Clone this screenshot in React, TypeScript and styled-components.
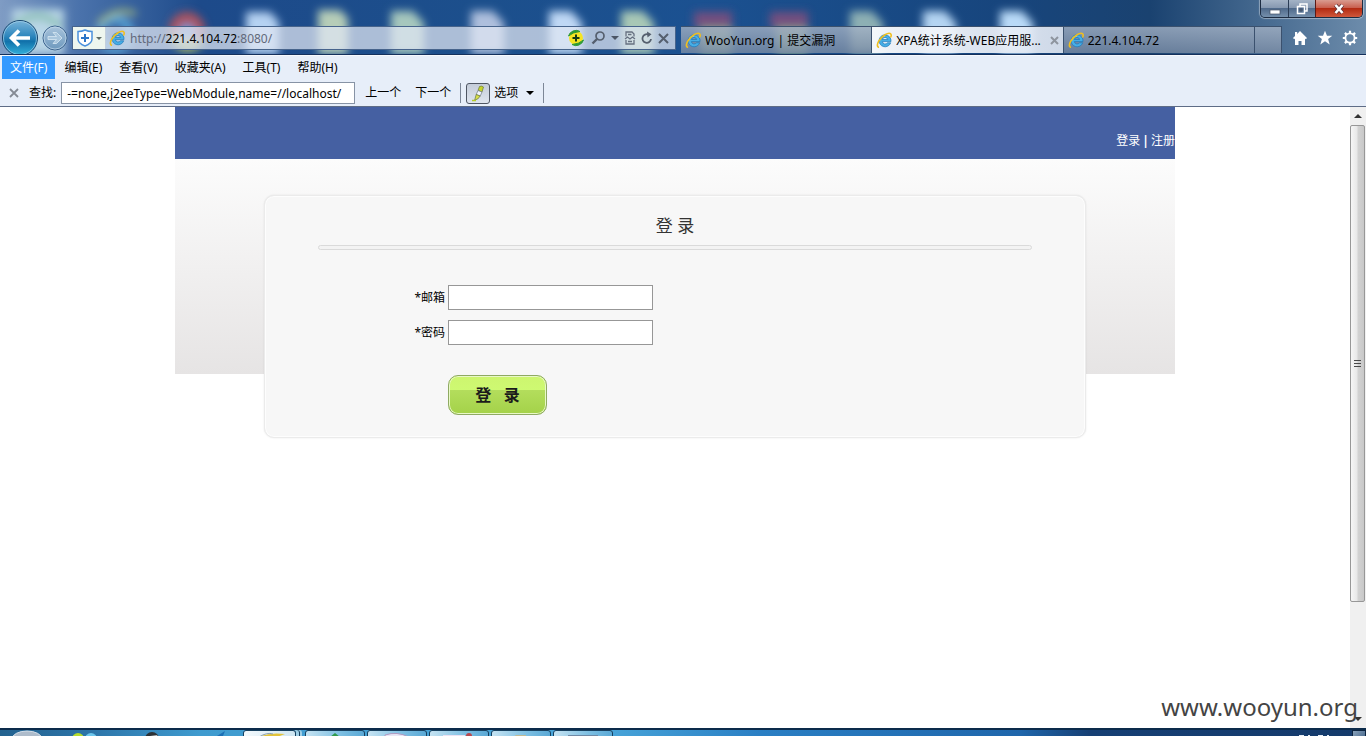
import React from "react";
import styled, { createGlobalStyle, css } from "styled-components";

const Global = createGlobalStyle`
  *, *::before, *::after { box-sizing: border-box; }
  body { margin: 0; background: #fff; overflow: hidden; }
  button, input { font: inherit; }
`;

const Desktop = styled.div`
  position: relative;
  display: flex;
  flex-direction: column;
  height: 100vh;
  font-family: "Noto Sans", "Noto Sans CJK SC", sans-serif;
  font-size: 12px;
  line-height: 16px;
  color: #000;
`;

const PlainButton = styled.button`
  display: flex;
  align-items: center;
  justify-content: center;
  padding: 0;
  border: 0;
  background: none;
  color: inherit;
  flex: none;
`;

/* ---------- window frame ---------- */

const Frame = styled.header`
  position: relative;
  flex: none;
  overflow: hidden;
  background: linear-gradient(90deg, #7f9cc4 0, #4a72ab 80px, #1d4a8a 200px, #1c4f8c 480px, #1b5191 700px, #17457d 1000px, #1a4270 1150px, #45698f 1260px, #6d8cab 100%);
  border-bottom: 1px solid #14305c;
`;

const Glass = styled.svg`
  position: absolute;
  left: 0;
  top: 0;
  width: 100%;
  height: 54px;
`;

const CaptionRow = styled.div`
  position: relative;
  display: flex;
  justify-content: flex-end;
  height: 20px;
  padding-right: 3px;
`;

const CaptionGroup = styled.div`
  display: flex;
  height: 18px;
  border: 1px solid #1d2c42;
  border-top: 0;
  border-radius: 0 0 5px 5px;
  overflow: hidden;
  box-shadow: 0 0 1px 1px rgba(255, 255, 255, 0.4);
`;

const CaptionButton = styled(PlainButton)<{ $close?: boolean }>`
  width: ${(p) => (p.$close ? 47 : 27)}px;
  border-left: 1px solid ${(p) => (p.$close ? "#5b1a16" : "#2a3c55")};
  background: ${(p) =>
    p.$close
      ? "linear-gradient(#d99c90 0, #c9604f 45%, #b32b12 50%, #d0583c 100%)"
      : "linear-gradient(#a4b3c6 0, #8799b1 45%, #506a8b 50%, #7590ac 100%)"};
  &:first-child { border-left: 0; }
`;

const NavRow = styled.div`
  position: relative;
  display: flex;
  align-items: flex-start;
  height: 34px;
`;

const RoundNav = styled.div`
  display: flex;
  align-items: center;
  width: 72px;
  height: 34px;
  flex: none;
`;

const AddressBar = styled.div`
  display: flex;
  align-items: center;
  flex: 603 1 0;
  min-width: 0;
  height: 24px;
  margin-top: 6px;
  border: 1px solid #47648c;
  background: rgba(222, 230, 241, 0.74);
`;

const Shield = styled(PlainButton)`
  width: 33px;
  height: 22px;
  background: #eef6ef;
  border-right: 1px solid #c3cfdc;
  gap: 3px;
`;

const AddressField = styled.div`
  display: flex;
  align-items: center;
  flex: 1;
  min-width: 0;
  gap: 4px;
  padding-left: 3px;
`;

const Url = styled.div`
  padding-top: 1px;
  color: #62697a;
  white-space: nowrap;
  b { font-weight: 400; color: #000; }
`;

const AddressTools = styled.div`
  display: flex;
  align-items: center;
  gap: 5px;
  padding-right: 6px;
`;

const Tabs = styled.div`
  display: flex;
  flex: 602 1 0;
  min-width: 0;
  height: 27px;
  margin: 6px 0 0 5px;
`;

const Tab = styled.button<{ $active?: boolean; $stub?: boolean }>`
  display: flex;
  align-items: center;
  gap: 3px;
  flex: ${(p) => (p.$stub ? "0 0 27px" : "1 1 0")};
  min-width: 0;
  padding: 1px 4px 0;
  border: 1px solid #3b516e;
  border-width: 1px 1px 0 0;
  color: #000;
  white-space: nowrap;
  text-align: left;
  background: ${(p) =>
    p.$active
      ? "linear-gradient(90deg, rgba(248,250,253,.96), rgba(226,233,244,.9))"
      : "linear-gradient(rgba(164,178,197,.8), rgba(122,140,165,.8))"};
`;

const TabTitle = styled.span`
  flex: 1;
  min-width: 0;
  overflow: hidden;
`;

const FrameTools = styled.div`
  display: flex;
  align-items: center;
  justify-content: flex-end;
  gap: 9px;
  width: 84px;
  height: 34px;
  padding: 2px 8px 0 0;
  flex: none;
`;

/* ---------- menu and find bars ---------- */

const Bars = styled.div`
  flex: none;
  background: #e7eef9;
  border-top: 1px solid #f6f9fd;
  border-bottom: 1px solid #5e6c86;
`;

const MenuBar = styled.nav`
  display: flex;
  gap: 1px;
  height: 24px;
  padding-left: 2px;
`;

const MenuItem = styled(PlainButton)<{ $active?: boolean }>`
  height: 23px;
  padding: 0 8px;
  ${(p) => p.$active && css`background: #3399ff; color: #fff;`}
`;

const FindBar = styled.div`
  display: flex;
  align-items: center;
  height: 26px;
  padding-left: 8px;
`;

const FindLabel = styled.label`
  margin: 0 5px 0 9px;
`;

const FindInput = styled.input`
  width: 294px;
  height: 22px;
  padding: 0 0 0 5px;
  border: 1px solid #8793a5;
  background: #fff;
  color: #000;
`;

const FindLinks = styled.div`
  display: flex;
  gap: 14px;
  margin-left: 10px;
`;

const Separator = styled.span`
  width: 1px;
  height: 20px;
  margin-left: 9px;
  background: #7d8797;
`;

const Highlight = styled(PlainButton)`
  width: 24px;
  height: 21px;
  margin: 0 4px 0 5px;
  border: 1px solid #4f5663;
  border-radius: 3px;
  background: linear-gradient(#c4ccd9, #dfe5ef);
`;

const Options = styled(PlainButton)`
  gap: 8px;
`;

/* ---------- page ---------- */

const Viewport = styled.div`
  display: flex;
  flex: 1;
  min-height: 0;
  background: #fff;
`;

const PageArea = styled.div`
  flex: 1;
  min-width: 0;
`;

const Site = styled.div`
  max-width: 1000px;
  margin: 0 auto;
`;

const SiteHeader = styled.div`
  display: flex;
  align-items: flex-end;
  justify-content: flex-end;
  gap: 2px;
  height: 52px;
  padding-bottom: 10px;
  background: #4560a2;
  color: #fff;
  a { color: #fff; text-decoration: none; }
`;

const Band = styled.main`
  padding: 36px 89px 0;
  background: linear-gradient(#fcfcfc, #e6e4e4) no-repeat 0 0 / 100% 215px;
`;

const Panel = styled.section`
  min-height: 243px;
  border: 1px solid #ebebeb;
  border-radius: 10px;
  background: #f7f7f7;
  box-shadow: inset 0 0 0 1px #fdfdfd, 0 0 2px rgba(0, 0, 0, 0.1);
  padding: 18px 53px 0;
`;

const Heading = styled.h1`
  margin: 0;
  font-size: 17px;
  line-height: 24px;
  font-weight: 400;
  text-align: center;
  color: #333;
`;

const Rule = styled.div`
  height: 5px;
  margin: 7px 0 35px;
  border: 1px solid #dadada;
  border-radius: 3px;
  background: #f3f3f3;
`;

const Form = styled.form`
  display: grid;
  grid-template-columns: 127px 205px;
  column-gap: 3px;
  row-gap: 10px;
  align-items: center;
`;

const FieldLabel = styled.label`
  text-align: right;
`;

const Field = styled.input`
  width: 205px;
  height: 25px;
  padding: 0 4px;
  border: 1px solid #979797;
  background: #fff;
`;

const Submit = styled.button`
  grid-column: 2;
  justify-self: start;
  width: 99px;
  height: 40px;
  margin-top: 20px;
  padding: 0;
  border: 1px solid #8faa62;
  border-radius: 10px;
  background: linear-gradient(#cdf56f 0, #cef972 37%, #b3dd5c 38%, #a4d249 100%);
  box-shadow: inset 0 0 0 1px #e9f8c8;
  font-size: 16px;
  font-weight: 700;
  color: #1b1b1b;
  white-space: pre;
`;

/* ---------- scroll bar ---------- */

const ScrollBar = styled.div`
  display: flex;
  flex-direction: column;
  flex: none;
  width: 16px;
  background: #f0f0f0;
`;

const ScrollArrow = styled(PlainButton)`
  height: 18px;
`;

const Thumb = styled.div`
  display: flex;
  align-items: center;
  justify-content: center;
  flex: 477 1 0;
  margin-right: 1px;
  border: 1px solid #979797;
  border-radius: 2px;
  background: linear-gradient(90deg, #f6f6f6 0, #e8e8e8 45%, #d2d2d2 55%, #c8c8c8 100%);
`;

const Track = styled.div`
  flex: 109 1 0;
`;

const Watermark = styled.div`
  position: absolute;
  right: 8px;
  bottom: 12px;
  font-size: 24px;
  line-height: 34px;
  color: #444;
`;

/* ---------- task bar ---------- */

const TaskBar = styled.footer`
  display: flex;
  flex: none;
  height: 8px;
  overflow: hidden;
  border-top: 2px solid #0c2b4b;
  background: linear-gradient(90deg, #23628f 0, #2c74a8 90px, #3f9bcf 200px, #49a6da 600px, #2a7fc4 760px, #1f66ab 1020px, #163f74 1090px, #143a6b 100%);
`;

const Launchers = styled.svg`
  flex: none;
  width: 243px;
  height: 6px;
`;

const Task = styled(PlainButton)<{ $active?: boolean }>`
  width: ${(p) => (p.$active ? 53 : 60)}px;
  height: 12px;
  margin-right: ${(p) => (p.$active ? 9 : 2)}px;
  align-items: flex-start;
  border: 1px solid #17405f;
  border-radius: 3px;
  box-shadow: ${(p) => (p.$active ? "3px 0 0 #9fcfe6, 4px 0 0 #17405f, 6px 0 0 #9fcfe6" : "none")};
  background: ${(p) =>
    p.$active
      ? "linear-gradient(90deg, #f3f9fc, #cfe6f2)"
      : "linear-gradient(90deg, #c5e3f2, #7dbfe2 60%, #5aa9d6)"};
`;

const Tray = styled.div`
  display: flex;
  margin-left: auto;
  gap: 20px;
`;

const ShowDesktop = styled(PlainButton)`
  width: 14px;
  height: 12px;
  border: 1px solid #0c2440;
  background: linear-gradient(135deg, #8aa2ba, #3d5f86);
`;

/* ---------- drawings ---------- */

const IeIcon = () => (
  <svg width="17" height="17" viewBox="0 0 17 17" style={{ flex: "none" }} aria-hidden="true">
    <path fillRule="evenodd" d="M9 2.800a6 6 0 0 1 6 6.800H6.300a2.900 2.900 0 0 0 5.200 1.200h3.200A6 6 0 1 1 9 2.800zM6.300 7.500h5.400a2.800 2.800 0 0 0-5.400 0z" fill="#46aee6" stroke="#1c78ba" strokeWidth=".7" />
    <path d="M4.200 8.200A5 5 0 0 1 9 3.900" fill="none" stroke="#a5dcf7" />
    <path d="M2.300 15.200C-.4 13 3.600 6 9 2.800c3.200-2 5.800-2 6.200 0 .1 1-.1 1.600-.4 2.200" fill="none" stroke="#f0bf1e" strokeWidth="1.600" strokeLinecap="round" />
  </svg>
);

const Caret = ({ color = "#4c5666" }: { color?: string }) => (
  <svg width="8" height="4" viewBox="0 0 8 4" aria-hidden="true"><path d="M0 0h8L4 4z" fill={color} /></svg>
);

const deskFiles = [
  { x: 388, c: "#a6c7bd" }, { x: 468, c: "#aebfdd" }, { x: 546, c: "#bfd8f5" },
  { x: 618, c: "#a8c8b6" }, { x: 847, c: "#8db0b4" }, { x: 920, c: "#b4d4f2" }, { x: 997, c: "#b9daf8" },
];

const GlassDrawing = () => (
  <Glass aria-hidden="true">
    <defs>
      <filter id="soft" x="-10%" y="-30%" width="120%" height="160%"><feGaussianBlur stdDeviation="4" /></filter>
    </defs>
    <g filter="url(#soft)">
      <rect x="12" y="9" width="52" height="45" fill="#b9d6e6" />
      <path d="M14 26Q38 6 60 26" stroke="#74b7a0" strokeWidth="5" fill="none" />
      <circle cx="115" cy="34" r="15" fill="none" stroke="#58a4d6" strokeWidth="8" />
      <path d="M98 24Q116 6 136 14" stroke="#9eb57f" strokeWidth="5" fill="none" />
      <circle cx="187" cy="30" r="18" fill="#a9525f" />
      <path d="M170 34a18 18 0 0 0 34 8z" fill="#a9b765" />
      <circle cx="187" cy="32" r="8" fill="#6d9ad8" />
      <path d="M246 12h24l9 10v32h-33z" fill="#b5d2f2" />
      <path d="M318 10h22l8 8v36h-30z" fill="#b6cdb8" />
      {deskFiles.map((f) => (
        <path key={f.x} d={`M${f.x + 3} 11h22l11 12v31h-33z`} fill={f.c} />
      ))}
      <path d="M694 12h38v16h-38zM770 12h38v16h-38z" fill="#74507f" />
      <path d="M700 28h32v26h-32zM776 28h32v26h-32z" fill="#8fae93" />
    </g>
  </Glass>
);

const BackForward = () => (
  <svg width="72" height="34" viewBox="0 20 72 34" role="img" aria-label="后退 前进">
    <defs>
      <linearGradient id="back" x1="0" y1="0" x2="0" y2="1">
        <stop offset="0" stopColor="#78b4da" /><stop offset=".45" stopColor="#2d86bd" />
        <stop offset=".6" stopColor="#1272ab" /><stop offset="1" stopColor="#35b4dd" />
      </linearGradient>
      <linearGradient id="fwd" x1="0" y1="0" x2="0" y2="1">
        <stop offset="0" stopColor="#a9c4dc" /><stop offset="1" stopColor="#6d98bd" />
      </linearGradient>
    </defs>
    <circle cx="20" cy="38" r="17.500" fill="url(#back)" stroke="#17466f" />
    <circle cx="20" cy="38" r="16.500" fill="none" stroke="#a5d2ea" strokeOpacity=".7" />
    <path d="M30 38H12M19 30.500L11.500 38l7.500 7.500" fill="none" stroke="#fff" strokeWidth="3.600" />
    <circle cx="55" cy="38" r="12" fill="url(#fwd)" stroke="#3c638d" />
    <circle cx="55" cy="38" r="11" fill="none" stroke="#c6dcec" strokeOpacity=".7" />
    <path d="M48 36.500h8.500l-3.500-4h3.500l5.500 5.500-5.500 5.500H53l3.500-4H48z" fill="#a9c6dd" stroke="#d8e8f4" strokeWidth=".8" />
  </svg>
);

const ToolIcons = () => (
  <AddressTools>
    <svg width="18" height="18" viewBox="0 0 18 18" aria-hidden="true">
      <circle cx="9" cy="9" r="7" fill="#f5e523" />
      <path d="M1.500 7A7.800 7.800 0 0 1 13 2.500Q6 3 1.500 7zM16.500 11A7.800 7.800 0 0 1 5 15.500Q12 15 16.500 11z" fill="#2e9a35" stroke="#2e9a35" />
      <path d="M9 5.500v7M5.500 9h7" stroke="#163c16" strokeWidth="2" />
    </svg>
    <svg width="16" height="16" viewBox="0 0 16 16" fill="none" stroke="#555f6e" aria-hidden="true">
      <circle cx="10" cy="6" r="4" strokeWidth="1.700" /><path d="M7 9L2.500 13.500" strokeWidth="2.400" />
    </svg>
    <Caret />
    <svg width="12" height="14" viewBox="0 0 12 14" fill="none" stroke="#667080" strokeWidth="1.300" aria-hidden="true">
      <path d="M2 5.500V1h6l2 2v2.500M2 9v4h8V9M1 8l2.500-2 2.500 2 2.500-2L11 8M4 3.500h3.500M4 10.500h4" />
    </svg>
    <svg width="12" height="14" viewBox="0 0 12 14" fill="none" stroke="#555f6e" strokeWidth="1.800" aria-hidden="true">
      <path d="M10 8A4.300 4.300 0 1 1 7.500 3.600" /><path d="M6 .5l4.500 2.800L6.500 6.500z" fill="#555f6e" stroke="none" />
    </svg>
    <svg width="11" height="11" viewBox="0 0 11 11" stroke="#555f6e" strokeWidth="2" aria-hidden="true"><path d="M1 1l9 9M10 1l-9 9" /></svg>
  </AddressTools>
);

const menus = ["文件(F)", "编辑(E)", "查看(V)", "收藏夹(A)", "工具(T)", "帮助(H)"];

export default function App() {
  return (
    <Desktop>
      <Global />
      <Frame>
        <GlassDrawing />
        <CaptionRow>
          <CaptionGroup>
            <CaptionButton aria-label="最小化">
              <svg width="12" height="14"><rect x="1" y="8" width="10" height="4" fill="#fff" stroke="#445267" strokeWidth=".7" /></svg>
            </CaptionButton>
            <CaptionButton aria-label="还原">
              <svg width="12" height="14" viewBox="0 0 12 14" fill="none" stroke="#fff" strokeWidth="1.500">
                <path d="M4 4V2h7v7H9" /><rect x="1.500" y="4.500" width="7" height="7" /><path d="M4 7h2v2H4z" strokeWidth="1" stroke="#45546b" />
              </svg>
            </CaptionButton>
            <CaptionButton $close aria-label="关闭">
              <svg width="12" height="12" viewBox="0 0 12 12"><path d="M2.500 2l7 8M9.500 2l-7 8" stroke="#5a3038" strokeWidth="4" /><path d="M2.500 2l7 8M9.500 2l-7 8" stroke="#fff" strokeWidth="2.600" /></svg>
            </CaptionButton>
          </CaptionGroup>
        </CaptionRow>
        <NavRow>
          <RoundNav><BackForward /></RoundNav>
          <AddressBar>
            <Shield aria-label="安全">
              <svg width="16" height="18" viewBox="0 0 16 18"><path d="M1 2.500q4 0 7-1.500 3 1.500 7 1.500V10q0 4.500-7 7-7-2.500-7-7z" fill="#fff" stroke="#4a90dc" strokeWidth="1.500" /><path d="M8 5v8M4 9h8" stroke="#2b74c8" strokeWidth="2" /></svg>
              <svg width="6" height="3"><path d="M0 0h6L3 3z" fill="#5c6b66" /></svg>
            </Shield>
            <AddressField>
              <IeIcon />
              <Url>http://<b>221.4.104.72</b>:8080/</Url>
            </AddressField>
            <ToolIcons />
          </AddressBar>
          <Tabs>
            <Tab><IeIcon /><TabTitle>WooYun.org | 提交漏洞</TabTitle></Tab>
            <Tab $active>
              <IeIcon /><TabTitle>XPA统计系统-WEB应用服...</TabTitle>
              <svg width="9" height="9" viewBox="0 0 9 9" stroke="#8e959f" strokeWidth="2"><path d="M1 1l7 7M8 1L1 8" /></svg>
            </Tab>
            <Tab><IeIcon /><TabTitle>221.4.104.72</TabTitle></Tab>
            <Tab $stub aria-label="新建标签页" />
          </Tabs>
          <FrameTools>
            <PlainButton aria-label="主页">
              <svg width="16" height="16" viewBox="0 0 16 16" fill="#fff"><path d="M8 1l7 7-1.200 1.200L13 8.500V15H9.500v-4h-3v4H3V8.500l-.8.7L1 8l2-2V2h2.200v2z" /></svg>
            </PlainButton>
            <PlainButton aria-label="收藏">
              <svg width="16" height="16" viewBox="0 0 16 16" fill="#fff"><path d="M8 .8l2 5h5.300l-4.200 3.300 1.600 5.400L8 11.300l-4.700 3.200 1.600-5.400L.7 5.800H6z" /></svg>
            </PlainButton>
            <PlainButton aria-label="工具">
              <svg width="16" height="16" viewBox="0 0 16 16" fill="none" stroke="#fff"><circle cx="8" cy="8" r="4.600" strokeWidth="1.800" /><path d="M8 .8v3M8 12.200v3M.8 8h3M12.200 8h3M2.900 2.900l2 2M11.100 11.100l2 2M2.900 13.100l2-2M11.100 4.900l2-2" strokeWidth="2.200" /></svg>
            </PlainButton>
          </FrameTools>
        </NavRow>
      </Frame>

      <Bars>
        <MenuBar>
          {menus.map((m, i) => <MenuItem key={m} $active={i === 0}>{m}</MenuItem>)}
        </MenuBar>
        <FindBar>
          <PlainButton aria-label="关闭查找">
            <svg width="12" height="10" viewBox="0 0 12 10" stroke="#858b95" strokeWidth="1.800"><path d="M2 1l8 8M10 1L2 9" /></svg>
          </PlainButton>
          <FindLabel htmlFor="find">查找:</FindLabel>
          <FindInput id="find" defaultValue="-=none,j2eeType=WebModule,name=//localhost/" />
          <FindLinks>
            <PlainButton>上一个</PlainButton>
            <PlainButton>下一个</PlainButton>
          </FindLinks>
          <Separator />
          <Highlight aria-label="突出显示">
            <svg width="16" height="17" viewBox="0 0 16 17">
              <path d="M9.500 1.500q2-1 4 .5l-1.500 5-4-1.500z" fill="#c6d62c" stroke="#68743a" strokeWidth=".7" />
              <path d="M8 5.500l4 1.500-1.800 4-4-1.500z" fill="#f4f7fb" stroke="#6c7887" strokeWidth=".7" />
              <path d="M6.200 9.500l4 1.500-2.500 3-3 1z" fill="#d9e04a" stroke="#68743a" strokeWidth=".7" />
              <path d="M2 15.500h4" stroke="#b7cb28" strokeWidth="1.500" />
            </svg>
          </Highlight>
          <Options>选项<Caret color="#000" /></Options>
          <Separator />
        </FindBar>
      </Bars>

      <Viewport>
        <PageArea>
          <Site>
            <SiteHeader><a href="#login">登录</a><b>|</b><a href="#register">注册</a></SiteHeader>
            <Band>
              <Panel>
                <Heading>登 录</Heading>
                <Rule />
                <Form onSubmit={(e) => e.preventDefault()}>
                  <FieldLabel htmlFor="email">*邮箱</FieldLabel>
                  <Field id="email" type="text" />
                  <FieldLabel htmlFor="password">*密码</FieldLabel>
                  <Field id="password" type="password" />
                  <Submit type="submit">登{"   "}录</Submit>
                </Form>
              </Panel>
            </Band>
          </Site>
        </PageArea>
        <ScrollBar>
          <ScrollArrow aria-label="向上滚动"><svg width="8" height="4"><path d="M0 4h8L4 0z" fill="#333" /></svg></ScrollArrow>
          <Thumb><svg width="7" height="8" stroke="#4a4a4a"><path d="M0 1.500h7M0 4.500h7M0 7.500h7" /></svg></Thumb>
          <Track />
          <ScrollArrow aria-label="向下滚动"><Caret color="#333" /></ScrollArrow>
        </ScrollBar>
      </Viewport>

      <TaskBar>
        <Launchers aria-hidden="true">
          <ellipse cx="27" cy="9" rx="15" ry="8" fill="#aebccb" stroke="#d6e0ea" />
          <circle cx="78" cy="9" r="6" fill="#b6dc2c" /><circle cx="91" cy="9" r="6" fill="#6cc7ee" />
          <circle cx="152" cy="9" r="7" fill="#2c3236" /><path d="M150 6l8-1-4 3z" fill="#d8dde0" />
          <path d="M217 6l8-5-2 5z" fill="#1c6fb5" />
        </Launchers>
        <Task $active><svg width="34" height="6"><path d="M6 6Q16 1 32 3l-8 3z" fill="#e2c33a" /><path d="M6 6Q14 1 20 3" stroke="#8aa0b0" fill="none" /></svg></Task>
        <Task><svg width="20" height="6"><path d="M5 6l5-4 5 4z" fill="#2f9a4b" /></svg></Task>
        <Task><svg width="28" height="6"><path d="M2 6V4q12-4 24 2z" fill="#e8e6f4" stroke="#b09ac0" /></svg></Task>
        <Task><svg width="40" height="6"><path d="M4 4h22v2H4z" fill="#ece2f2" /><circle cx="30" cy="5" r="3" fill="#b8484e" /></svg></Task>
        <Task><svg width="24" height="6"><path d="M4 6l3-2h10v2z" fill="#c2bb94" /></svg></Task>
        <Task><svg width="32" height="6"><path d="M1 4h30v2H1z" fill="#6f89a5" /></svg></Task>
        <Tray>
          <svg width="34" height="6" aria-hidden="true"><path d="M1 5.500h5M10 5.500h2M20 5.500h5M29 5.500h2" stroke="#e6eef6" /></svg>
          <ShowDesktop aria-label="显示桌面" />
        </Tray>
      </TaskBar>
      <Watermark>www.wooyun.org</Watermark>
    </Desktop>
  );
}
